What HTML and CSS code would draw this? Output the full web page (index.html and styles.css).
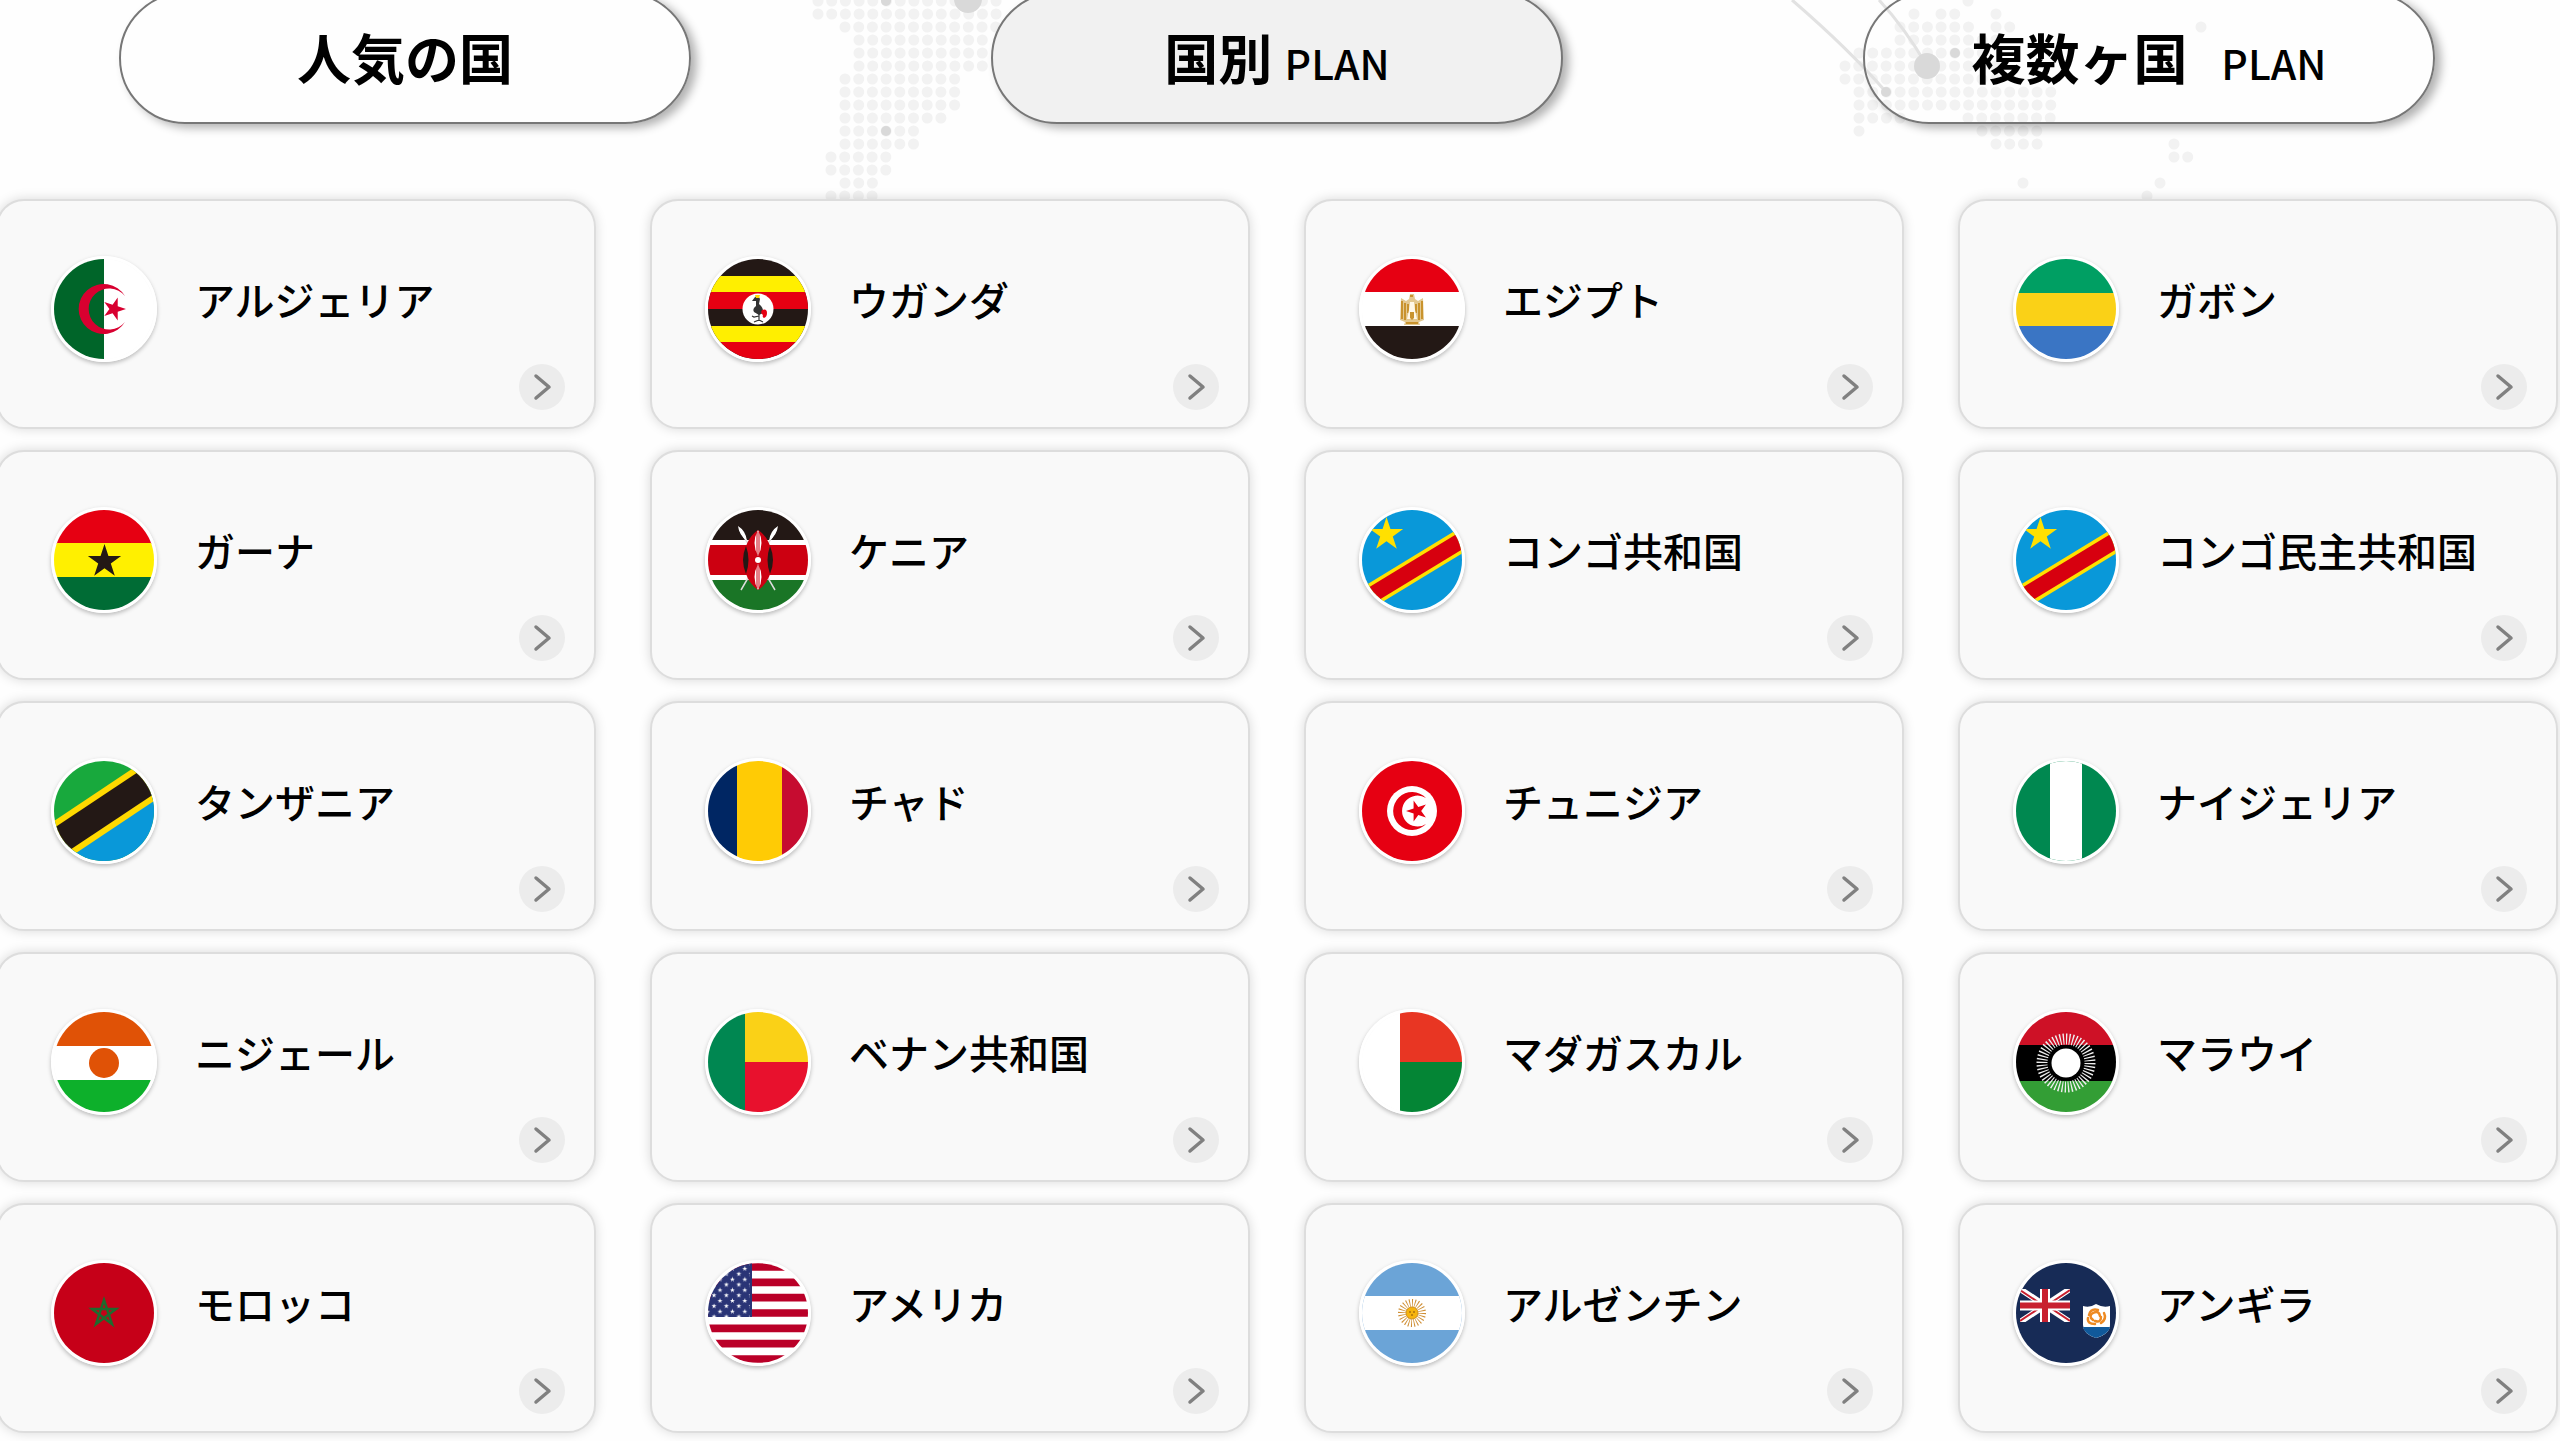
FILE: index.html
```html
<!DOCTYPE html>
<html lang="ja">
<head>
    <meta charset="UTF-8">
    <meta name="viewport" content="width=device-width, initial-scale=1.0">
    <title>国別PLAN</title>
    <link rel="stylesheet" href="styles.css">
</head>
<body>

    <!-- shared shapes -->
    <svg class="defs" aria-hidden="true">
        <symbol id="star" viewBox="-10 -10 20 20">
            <path d="M0-10 2.25-3.1 9.5-3.1 3.6 1.2 5.9 8.1 0 3.8-5.9 8.1-3.6 1.2-9.5-3.1-2.25-3.1Z"/>
        </symbol>
        <symbol id="arrow" viewBox="0 0 46 46">
            <path d="M17 12 30 23 17 34" fill="none" stroke="#808080" stroke-width="3.500" stroke-linecap="round" stroke-linejoin="round"/>
        </symbol>
        <symbol id="flag-congo" viewBox="0 0 100 100">
            <path fill="#0998d9" d="M0 0h100v100H0z"/>
            <path stroke="#ffe000" stroke-width="23" d="M-10 97 110 24"/>
            <path stroke="#d7000f" stroke-width="16" d="M-10 97 110 24"/>
            <use href="#star" x="7" y="7" width="35" height="35" fill="#ffe000"/>
        </symbol>
    </svg>

    <!-- world map behind the tabs -->
    <svg class="map" viewBox="0 0 2560 210" aria-hidden="true">
        <g class="dots">
            <path d="M818 1h180M818 14h180M845 27h160M859 40h125M859 53h125M859 66h125M845 79h111M845 92h111M845 105h111M845 118h97M845 131h70M845 144h70M831 157h56M831 170h56M845 183h29M831 196h43"/>
            <path d="M1968 1h1M1914 14h1M1941 14h15M1996 14h1M1900 27h70M1996 27h15M2201 27h1M1900 40h97M1859 53h125M1845 66h152M1845 79h152M1859 92h194M1859 105h194M1859 118h43M1968 118h84M1859 131h1M1982 131h57M1996 144h43M2174 144h1M2174 157h15M2023 183h1M2160 183h1M2147 196h1"/>
        </g>
        <path class="route" d="M1792 0Q1850 50 1886 92M1879 0Q1905 28 1927 66"/>
        <g class="spots">
            <circle cx="968" cy="-1" r="14"/>
            <circle cx="886" cy="1" r="5"/>
            <circle cx="886" cy="131" r="5"/>
            <circle cx="1927" cy="66" r="13"/>
            <circle cx="1955" cy="53" r="5"/>
            <circle cx="1886" cy="92" r="5"/>
        </g>
    </svg>

    <main class="plans">
        <nav class="tabs">
            <a class="tab" href="#popular">人気の国</a>
            <a class="tab active" href="#country">国別 <small>PLAN</small></a>
            <a class="tab" href="#multi">複数ヶ国 &nbsp;<small>&nbsp;PLAN</small></a>
        </nav>

        <div class="countries">
            <a class="card" href="#">
                <svg class="flag" viewBox="0 0 100 100">
                    <path fill="#fff" d="M0 0h100v100H0z"/>
                    <path fill="#006529" d="M0 0h50v100H0z"/>
                    <path fill="#d80030" d="M71 37A25 25 0 1 0 71 63 20.500 20.500 0 1 1 71 37Z"/>
                    <use href="#star" x="48" y="38" width="24" height="24" fill="#d80030" transform="rotate(90 60 50)"/>
                </svg>
                <span class="name">アルジェリア</span>
                <svg class="arrow"><use href="#arrow"/></svg>
            </a>
            <a class="card" href="#">
                <svg class="flag" viewBox="0 0 100 100">
                    <path fill="#231815" d="M0 0h100v100H0z"/>
                    <path fill="#ffef00" d="M0 17h100v16H0zM0 67h100v16H0z"/>
                    <path fill="#e60012" d="M0 33h100v17H0zM0 83h100v17H0z"/>
                    <circle cx="50" cy="50" r="15.500" fill="#fff"/>
                    <path fill="#333" d="M47 38q4-2 5 2l-1 5q5 4 4 9l-4 2-5-3q-2-3 2-6l0-5-4 0z"/>
                    <path fill="none" stroke="#333" stroke-width="1.200" d="M51 55v7M46 63l5-2 4 2M51 57l-5 1-2-1"/>
                    <path fill="#e60012" d="M54 51q5-2 5 3 0 4-3 5-2-1-1-3-3-2-1-5z"/>
                    <path fill="#ffd800" d="M47 36h5l-1 3h-3z"/>
                </svg>
                <span class="name">ウガンダ</span>
                <svg class="arrow"><use href="#arrow"/></svg>
            </a>
            <a class="card" href="#">
                <svg class="flag" viewBox="0 0 100 100">
                    <path fill="#fff" d="M0 0h100v100H0z"/>
                    <path fill="#e60012" d="M0 0h100v33H0z"/>
                    <path fill="#231815" d="M0 67h100v33H0z"/>
                    <path fill="#e3c88f" d="M48 35h4l1 5 3 2 5-3 1 22-5 2 1 3H42l1-3-5-2 1-22 5 3 3-2z"/>
                    <path fill="none" stroke="#c9932d" stroke-width="2" d="M40 42v18M43 44v17M60 42v18M57 44v17M46 45v9M54 45v9M48 37h3"/>
                    <path fill="#fff8e8" d="M48 43h4l1 8 2 9H45l2-9z"/>
                    <path fill="#c9932d" d="M48 53h4v6l-2 2-2-2zM44 63h12v2H44z"/>
                </svg>
                <span class="name">エジプト</span>
                <svg class="arrow"><use href="#arrow"/></svg>
            </a>
            <a class="card" href="#">
                <svg class="flag" viewBox="0 0 100 100">
                    <path fill="#009f63" d="M0 0h100v34H0z"/>
                    <path fill="#fad117" d="M0 34h100v34H0z"/>
                    <path fill="#3a75c4" d="M0 67h100v33H0z"/>
                </svg>
                <span class="name">ガボン</span>
                <svg class="arrow"><use href="#arrow"/></svg>
            </a>

            <a class="card" href="#">
                <svg class="flag" viewBox="0 0 100 100">
                    <path fill="#e60012" d="M0 0h100v34H0z"/>
                    <path fill="#fff000" d="M0 33h100v34H0z"/>
                    <path fill="#006c35" d="M0 67h100v33H0z"/>
                    <use href="#star" x="33" y="34" width="35" height="35" fill="#231815"/>
                </svg>
                <span class="name">ガーナ</span>
                <svg class="arrow"><use href="#arrow"/></svg>
            </a>
            <a class="card" href="#">
                <svg class="flag" viewBox="0 0 100 100">
                    <path fill="#fff" d="M0 0h100v100H0z"/>
                    <path fill="#231815" d="M0 0h100v30H0z"/>
                    <path fill="#cc0011" d="M0 35h100v30H0z"/>
                    <path fill="#1a7526" d="M0 70h100v30H0z"/>
                    <path stroke="#ddd" stroke-width="1.500" d="M32 20 67 80M68 20 33 80"/>
                    <path fill="#fff" d="M30 16q8 5 9 15-8-6-9-15zM70 16q-8 5-9 15 8-6 9-15z"/>
                    <path fill="#cc0011" d="M50 20q14 9 14 30T50 80Q36 70 36 50t14-30z"/>
                    <path fill="#231815" d="M38 36q5 14 0 28-6-14 0-28zM62 36q-5 14 0 28 6-14 0-28z"/>
                    <path fill="#fff" d="M50 20q7 13 0 26-7-13 0-26zM50 80q7-13 0-26-7 13 0 26z"/>
                    <circle cx="50" cy="50" r="3" fill="#fff"/>
                    <path stroke="#cc0011" d="M49 22v23M51 22v23M49 55v23M51 55v23"/>
                </svg>
                <span class="name">ケニア</span>
                <svg class="arrow"><use href="#arrow"/></svg>
            </a>
            <a class="card" href="#">
                <svg class="flag"><use href="#flag-congo"/></svg>
                <span class="name">コンゴ共和国</span>
                <svg class="arrow"><use href="#arrow"/></svg>
            </a>
            <a class="card" href="#">
                <svg class="flag"><use href="#flag-congo"/></svg>
                <span class="name">コンゴ民主共和国</span>
                <svg class="arrow"><use href="#arrow"/></svg>
            </a>

            <a class="card" href="#">
                <svg class="flag" viewBox="0 0 100 100">
                    <path fill="#18a93d" d="M0 0h100v100H0z"/>
                    <path fill="#0998d9" d="M0 84 100 17v83H0z"/>
                    <path stroke="#ffd900" stroke-width="39" d="M-10 90 110 10"/>
                    <path stroke="#231815" stroke-width="27" d="M-10 90 110 10"/>
                </svg>
                <span class="name">タンザニア</span>
                <svg class="arrow"><use href="#arrow"/></svg>
            </a>
            <a class="card" href="#">
                <svg class="flag" viewBox="0 0 100 100">
                    <path fill="#002663" d="M0 0h29v100H0z"/>
                    <path fill="#ffcb05" d="M29 0h45v100H29z"/>
                    <path fill="#c60c30" d="M74 0h26v100H74z"/>
                </svg>
                <span class="name">チャド</span>
                <svg class="arrow"><use href="#arrow"/></svg>
            </a>
            <a class="card" href="#">
                <svg class="flag" viewBox="0 0 100 100">
                    <path fill="#e60012" d="M0 0h100v100H0z"/>
                    <circle cx="50" cy="50" r="25" fill="#fff"/>
                    <path fill="#e60012" d="M64 37A19 19 0 1 0 64 63 15.500 15.500 0 1 1 64 37Z"/>
                    <use href="#star" x="44" y="39" width="22" height="22" fill="#e60012" transform="rotate(-90 55 50)"/>
                </svg>
                <span class="name">チュニジア</span>
                <svg class="arrow"><use href="#arrow"/></svg>
            </a>
            <a class="card" href="#">
                <svg class="flag" viewBox="0 0 100 100">
                    <path fill="#008850" d="M0 0h100v100H0z"/>
                    <path fill="#fff" d="M34 0h32v100H34z"/>
                </svg>
                <span class="name">ナイジェリア</span>
                <svg class="arrow"><use href="#arrow"/></svg>
            </a>

            <a class="card" href="#">
                <svg class="flag" viewBox="0 0 100 100">
                    <path fill="#fff" d="M0 0h100v100H0z"/>
                    <path fill="#e05206" d="M0 0h100v34H0z"/>
                    <path fill="#0db02b" d="M0 68h100v32H0z"/>
                    <circle cx="50" cy="51" r="15" fill="#e05206"/>
                </svg>
                <span class="name">ニジェール</span>
                <svg class="arrow"><use href="#arrow"/></svg>
            </a>
            <a class="card" href="#">
                <svg class="flag" viewBox="0 0 100 100">
                    <path fill="#008751" d="M0 0h37v100H0z"/>
                    <path fill="#fad117" d="M37 0h63v50H37z"/>
                    <path fill="#e8112d" d="M37 50h63v50H37z"/>
                </svg>
                <span class="name">ベナン共和国</span>
                <svg class="arrow"><use href="#arrow"/></svg>
            </a>
            <a class="card" href="#">
                <svg class="flag" viewBox="0 0 100 100">
                    <path fill="#fff" d="M0 0h100v100H0z"/>
                    <path fill="#e83623" d="M38 0h62v50H38z"/>
                    <path fill="#048535" d="M38 50h62v50H38z"/>
                </svg>
                <span class="name">マダガスカル</span>
                <svg class="arrow"><use href="#arrow"/></svg>
            </a>
            <a class="card" href="#">
                <svg class="flag" viewBox="0 0 100 100">
                    <path d="M0 33h100v36H0z"/>
                    <path fill="#ce1126" d="M0 0h100v33H0z"/>
                    <path fill="#339e35" d="M0 69h100v31H0z"/>
                    <circle cx="50" cy="51" r="18"/>
                    <circle cx="50" cy="51" r="24" fill="none" stroke="#eee" stroke-width="11" stroke-dasharray="2 3" pathLength="240"/>
                    <circle cx="50" cy="51" r="14.500" fill="#fff"/>
                </svg>
                <span class="name">マラウイ</span>
                <svg class="arrow"><use href="#arrow"/></svg>
            </a>

            <a class="card" href="#">
                <svg class="flag" viewBox="0 0 100 100">
                    <path fill="#c60018" d="M0 0h100v100H0z"/>
                    <path fill="none" stroke="#1e6b2e" stroke-width="2.500" d="M50 37 58 61 38 46H62L42 61Z"/>
                </svg>
                <span class="name">モロッコ</span>
                <svg class="arrow"><use href="#arrow"/></svg>
            </a>
            <a class="card" href="#">
                <svg class="flag" viewBox="0 0 100 100">
                    <pattern id="stars" x="3" y="3" width="12.400" height="10.700" patternUnits="userSpaceOnUse">
                        <use href="#star" x="6" y="0" width="6" height="5.300" fill="#fff"/>
                        <use href="#star" x="0" y="5.300" width="6" height="5.300" fill="#fff"/>
                    </pattern>
                    <path fill="#fff" d="M0 0h100v100H0z"/>
                    <path stroke="#ba0028" stroke-width="7.700" d="M0 4h100M0 19.300h100M0 34.700h100M0 50h100M0 65.400h100M0 80.700h100M0 96h100"/>
                    <path fill="#2a3476" d="M0 0h44v54H0z"/>
                    <path fill="url(#stars)" d="M0 0h42v54H0z"/>
                </svg>
                <span class="name">アメリカ</span>
                <svg class="arrow"><use href="#arrow"/></svg>
            </a>
            <a class="card" href="#">
                <svg class="flag" viewBox="0 0 100 100">
                    <path fill="#6ba4d7" d="M0 0h100v100H0z"/>
                    <path fill="#fff" d="M0 33h100v34H0z"/>
                    <circle cx="50" cy="50" r="10" fill="none" stroke="#cf8f35" stroke-width="8" stroke-dasharray="1 2" pathLength="72"/>
                    <circle cx="50" cy="50" r="6" fill="#f6b40e" stroke="#cf8f1a"/>
                    <path fill="none" stroke="#85530c" d="M47 49h2M51 49h2M49 52h2"/>
                </svg>
                <span class="name">アルゼンチン</span>
                <svg class="arrow"><use href="#arrow"/></svg>
            </a>
            <a class="card" href="#">
                <svg class="flag" viewBox="0 0 100 100">
                    <path fill="#172b56" d="M0 0h100v100H0z"/>
                    <svg x="4" y="26" width="50" height="33" viewBox="0 0 50 33">
                        <path stroke="#fff" stroke-width="6" d="M0 0 50 33M50 0 0 33"/>
                        <path stroke="#c8202f" stroke-width="2" d="M0 1 24 17M50 1 26 17M0 32 24 16M50 32 26 16"/>
                        <path stroke="#fff" stroke-width="10" d="M25 0v33M0 16.500h50"/>
                        <path stroke="#c8202f" stroke-width="6" d="M25 0v33M0 16.500h50"/>
                    </svg>
                    <path fill="#fff" d="M67 43q7 2 13-2 7 4 14 2v19q0 9-14 13-13-4-13-13z"/>
                    <path fill="#10599b" d="M67 64h27q-1 7-14 11-12-4-13-11z"/>
                    <g fill="none" stroke="#ee8a22" stroke-width="2.500" stroke-linecap="round">
                        <path d="M73 52q2-7 9-5M88 50q3 6-3 10M79 61q-8 0-7-6"/>
                        <path d="M77 50q6-3 7 3M85 54q0 6-6 4M77 57q-5-4 0-7"/>
                    </g>
                </svg>
                <span class="name">アンギラ</span>
                <svg class="arrow"><use href="#arrow"/></svg>
            </a>
        </div>
    </main>

</body>
</html>
```
FILE: styles.css
```css
*{
    box-sizing: border-box;
}
body{
    margin: 0;
    overflow-x: hidden;
    background: #fefefe;
    color: #000;
    font-family: "Noto Sans CJK JP", "Noto Sans", sans-serif;
}
a{
    color: inherit;
    text-decoration: none;
}
.defs{
    position: absolute;
    width: 0;
    height: 0;
}

/* map */
.map{
    position: absolute;
    top: 0;
    left: 0;
    z-index: -1;
    width: 100%;
}
.dots{
    fill: none;
    stroke: #f2f2f2;
    stroke-width: 11;
    stroke-linecap: round;
    stroke-dasharray: 0 13.7;
}
.route{
    fill: none;
    stroke: #e2e2e2;
    stroke-width: 3;
}
.spots{
    fill: #d9d9d9;
}

.plans{
    margin: -8px 2px 0 -4px;
}

/* tabs */
.tabs{
    display: flex;
    gap: 300px;
    padding: 0 123px;
}
.tab{
    flex: 1;
    height: 132px;
    border: 2px solid #777;
    border-radius: 66px;
    box-shadow: 6px 4px 10px rgba(0, 0, 0, .3);
    font-size: 54px;
    font-weight: bold;
    line-height: 126px;
    text-align: center;
    white-space: nowrap;
}
.tab small{
    font-size: 41px;
    font-weight: 500;
}
.tab.active{
    background: #f1f1f1;
}

/* country cards */
.countries{
    display: grid;
    grid-template-columns: repeat(4, 1fr);
    gap: 21px 54px;
    margin: 75px 0 8px;
}
.card{
    display: flex;
    align-items: flex-start;
    height: 230px;
    padding: 55px 29px 17px 53px;
    border: 2px solid #ddd;
    border-radius: 28px;
    background: #f9f9f9;
    box-shadow: 0 0 12px rgba(0, 0, 0, .15);
}
.flag{
    flex: none;
    width: 106px;
    height: 106px;
    border: 3px solid #fff;
    border-radius: 50%;
    box-shadow: 0 2px 4px rgba(0, 0, 0, .25);
}
.name{
    flex: 1;
    margin-left: 38px;
    font-size: 40px;
    font-weight: 500;
    line-height: 86px;
    white-space: nowrap;
}
.arrow{
    flex: none;
    align-self: flex-end;
    width: 46px;
    height: 46px;
    margin-left: -46px;
    border-radius: 50%;
    background: #ececec;
}
```
